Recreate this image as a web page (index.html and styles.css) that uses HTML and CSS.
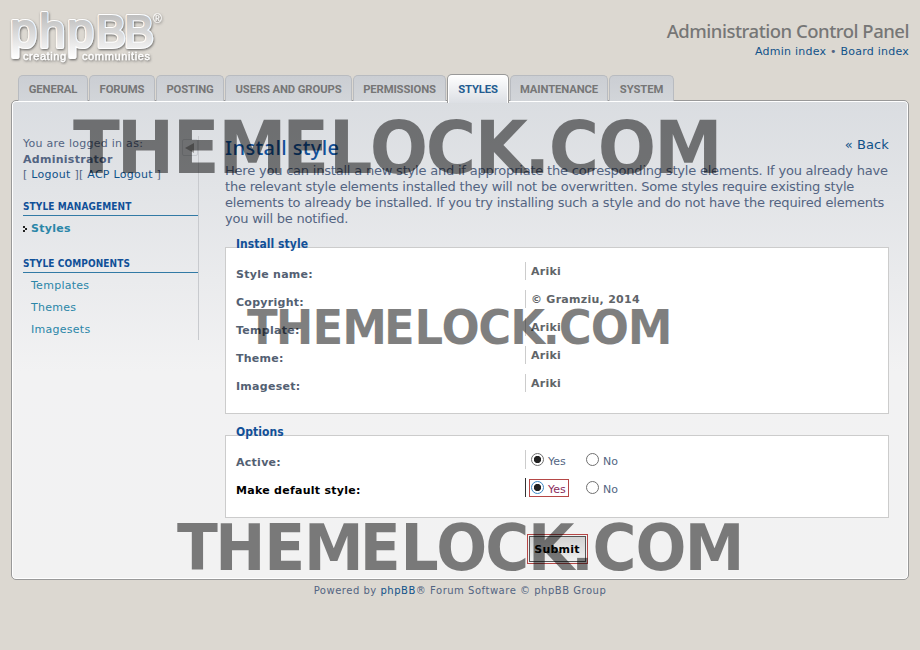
FILE: index.html
```
<!DOCTYPE html>
<html lang="en">
<head>
<meta charset="utf-8">
<title>Administration Control Panel</title>
<link rel="stylesheet" href="styles.css">
</head>
<body>
<header class="header">
  <svg class="logo" width="160" height="62" viewBox="0 0 160 62" role="img" aria-label="phpBB creating communities">
    <defs>
      <linearGradient id="silver" gradientUnits="userSpaceOnUse" x1="0" y1="6" x2="0" y2="50"><stop offset="0" stop-color="#bdbdbd"/><stop offset=".5" stop-color="#dedede"/><stop offset="1" stop-color="#fff"/></linearGradient>
      <filter id="shade" x="-10%" y="-10%" width="120%" height="130%"><feDropShadow dx=".7" dy="1.2" stdDeviation=".8" flood-color="#555" flood-opacity=".85"/></filter>
    </defs>
    <g filter="url(#shade)">
      <text class="logo-word logo-edge" y="38.5"><tspan class="p" x="0">p</tspan><tspan class="h" x="29">h</tspan><tspan class="p" x="57">p</tspan><tspan class="b" x="86">B</tspan><tspan class="b" x="114">B</tspan></text>
      <text class="logo-reg" x="143" y="15">®</text>
    </g>
    <text class="logo-word logo-fill" y="38.5"><tspan class="p" x="0">p</tspan><tspan class="h" x="29">h</tspan><tspan class="p" x="57">p</tspan><tspan class="b" x="86">B</tspan><tspan class="b" x="114">B</tspan></text>
    <g filter="url(#shade)" class="logo-tag">
      <text x="13" y="52" textLength="43">creating</text>
      <text x="72" y="52" textLength="68">communities</text>
    </g>
  </svg>
  <div class="header-info">
    <h1>Administration Control Panel</h1>
    <p><a href="#">Admin index</a> • <a href="#">Board index</a></p>
  </div>
</header>
<nav class="tabs">
  <a class="tab t-general" href="#">GENERAL</a>
  <a class="tab t-forums" href="#">FORUMS</a>
  <a class="tab t-posting" href="#">POSTING</a>
  <a class="tab t-users" href="#">USERS AND GROUPS</a>
  <a class="tab t-perm" href="#">PERMISSIONS</a>
  <a class="tab t-styles active" href="#">STYLES</a>
  <a class="tab t-maint" href="#">MAINTENANCE</a>
  <a class="tab t-system" href="#">SYSTEM</a>
</nav>
<div class="panel">
  <aside class="menu">
    <span class="toggle"></span>
    <div class="login">You are logged in as:<br><strong>Administrator</strong><br>[ <a href="#">Logout</a> ][ <a href="#">ACP Logout</a> ]</div>
    <h2>STYLE MANAGEMENT</h2>
    <a class="item current" href="#"><svg width="5" height="7" viewBox="0 0 5 7"><path d="M0 0h2v2H0zM2 2h2v2H2zM0 4h2v2H0z" fill="#222"/></svg>Styles</a>
    <h2 class="second">STYLE COMPONENTS</h2>
    <a class="item" href="#">Templates</a>
    <a class="item" href="#">Themes</a>
    <a class="item" href="#">Imagesets</a>
  </aside>
  <main class="main">
    <div class="title-row"><h2>Install style</h2><a href="#">« Back</a></div>
    <p class="intro">Here you can install a new style and if appropriate the corresponding style elements. If you already have<br>the relevant style elements installed they will not be overwritten. Some styles require existing style<br>elements to already be installed. If you try installing such a style and do not have the required elements<br>you will be notified.</p>
    <section class="box details">
      <h3>Install style</h3>
      <dl>
        <div><dt>Style name:</dt><dd>Ariki</dd></div>
        <div><dt>Copyright:</dt><dd>© Gramziu, 2014</dd></div>
        <div><dt>Template:</dt><dd>Ariki</dd></div>
        <div><dt>Theme:</dt><dd>Ariki</dd></div>
        <div><dt>Imageset:</dt><dd>Ariki</dd></div>
      </dl>
    </section>
    <section class="box options">
      <h3>Options</h3>
      <dl>
        <div><dt>Active:</dt><dd><label class="yes"><i class="radio on"></i>Yes</label><label><i class="radio"></i>No</label></dd></div>
        <div class="hover"><dt>Make default style:</dt><dd><label class="yes marked"><i class="radio on focus"></i>Yes</label><label><i class="radio"></i>No</label></dd></div>
      </dl>
    </section>
    <div class="submit-row"><span class="submit-mark"><button type="button">Submit</button></span></div>
  </main>
</div>
<footer>Powered by <a href="#">phpBB</a>® Forum Software © phpBB Group</footer>
<svg class="watermark" width="920" height="650" viewBox="0 0 920 650">
  <text transform="translate(73 172.8) scale(.96 1.01)" x="0 45.6 104 151.4 218 266.5 309.2 367.5 418.5 470 495.6 546.7 605.5">THEMELOCK.COM</text>
  <text transform="translate(247 344) scale(.629 .673)" x="0 45.6 104 151.4 218 266.5 309.2 367.5 418.5 470 495.6 546.7 605.5">THEMELOCK.COM</text>
  <text transform="translate(177 570) scale(.8385 .905)" x="0 45.6 104 151.4 218 266.5 309.2 367.5 418.5 470 495.6 546.7 605.5">THEMELOCK.COM</text>
</svg>
</body>
</html>
```
FILE: styles.css
```
* { box-sizing: border-box; }
body { margin: 0; width: 920px; height: 650px; overflow: hidden; background: #dcd8d1; color: #536482; font: 11px/16px "DejaVu Sans", sans-serif; letter-spacing: .27px; }
a { color: #105289; text-decoration: none; }
h1, h2, h3, p, dl, dd { margin: 0; }
.header { display: flex; justify-content: space-between; height: 74px; padding: 8px 11px 0 10px; }
.logo { display: block; overflow: visible; letter-spacing: 0; }
.logo-word { font: 46px "Liberation Sans", sans-serif; }
.logo-word .p { font-size: 48px; }
.logo-word .h { font-size: 47px; }
.logo-word .b { font-size: 44.5px; }
.logo-edge { fill: #fff; stroke: #fff; stroke-width: 4px; stroke-linejoin: round; }
.logo-fill { fill: url(#silver); stroke: url(#silver); stroke-width: 2px; stroke-linejoin: round; }
.logo-reg { font: 12px "Liberation Sans", sans-serif; fill: #fff; }
.logo-tag { font: 11px "Liberation Sans", sans-serif; fill: #fff; stroke: #fff; stroke-width: .3px; }
.header-info { text-align: right; padding-top: 11px; }
.header-info h1 { font: 500 18.5px/24px "Noto Sans", sans-serif; color: #767676; letter-spacing: -.49px; }
.header-info p { padding-top: 1px; letter-spacing: .24px; }
.tabs { display: flex; align-items: flex-end; height: 27px; padding-left: 18px; gap: 1px; }
.tab { height: 26px; border: 1px solid #b8bbc0; border-bottom: 0; border-radius: 5px 5px 0 0; background: linear-gradient(#cbced3, #d2d5d9); color: #767676; font: bold 11.3px/27px Roboto, sans-serif; letter-spacing: -.12px; text-align: center; white-space: nowrap; }
.t-general { width: 70px; }
.t-forums { width: 66px; }
.t-posting { width: 68px; }
.t-users { width: 127px; }
.t-perm { width: 93px; }
.t-styles { width: 62px; }
.t-maint { width: 98px; }
.t-system { width: 65px; }
.tab.active { position: relative; height: 29px; margin-bottom: -2px; border-color: #999; background: linear-gradient(#fff, #dcdfe4); box-shadow: inset 1px 1px #fff, inset -1px 0 #fff; color: #235c90; line-height: 29px; }
.panel { display: flex; width: 898px; height: 480px; margin: -1px 0 0 11px; border: 1px solid #999; border-radius: 5px; box-shadow: inset 0 0 0 1px #fff; background: linear-gradient(#dadde1, #f2f2f3 270px, #f2f2f2); padding: 35px 19px 0 11px; }
.menu { position: relative; width: 176px; height: 204px; border-right: 1px solid #c8cace; font-size: 11px; }
.toggle { position: absolute; right: 0; top: 3px; width: 16px; height: 17px; border: 1px solid #c7cacf; border-radius: 2px; }
.toggle::before { content: ""; position: absolute; left: 2px; top: 3px; border: 5px solid transparent; border-left: 0; border-right: 9px solid #969696; }
.login { height: 63px; line-height: 15.5px; }
.menu h2 { height: 17px; font: bold 10px/15px "DejaVu Sans Condensed", "DejaVu Sans", sans-serif; color: #115098; border-bottom: 1px solid #327aa5; letter-spacing: .1px; }
.menu h2.second { margin-top: 18px; }
.item { display: flex; align-items: center; height: 22px; padding: 4px 0 0 8px; color: #2a86a8; }
.item.current { padding-left: 0; gap: 3px; font-weight: bold; }
.main { width: 664px; margin-left: 26px; }
.title-row { display: flex; justify-content: space-between; height: 25px; }
.title-row h2 { font: 500 20px/23px "Noto Sans", sans-serif; color: #115098; letter-spacing: .4px; }
.title-row a { font-size: 13px; line-height: 17px; letter-spacing: .1px; }
.intro { font-size: 13px; line-height: 16px; height: 65px; padding-top: 2px; white-space: nowrap; letter-spacing: -.205px; }
.box { border: 1px solid #ccc; background: #fff; }
.box h3 { width: max-content; height: 17px; margin: -13px 0 0 10px; font: bold 12px/18px "DejaVu Sans Condensed", "DejaVu Sans", sans-serif; letter-spacing: .05px; color: #115098; }
.details { height: 167px; margin-top: 21px; }
.options { height: 83px; margin-top: 21px; }
.box dl { padding: 10px 10px 0; }
.box dl > div { display: flex; height: 28px; }
dt { width: 289px; padding-top: 5px; font-weight: bold; color: #536072; }
dd { display: flex; height: 18px; border-left: 1px solid #ccc; padding-left: 5px; line-height: 19px; font-weight: bold; color: #606468; }
.options dd { height: 19px; padding-left: 3px; font-weight: normal; color: #536482; }
dd label { display: flex; align-items: center; height: 18px; gap: 4px; margin-top: 1px; padding: 3px 1px 0; border: 1px solid transparent; line-height: 16px; letter-spacing: 0; }
.yes { width: 40px; margin-right: 15px; }
.marked { border-color: #b54746; color: #8a2c5c; }
.radio { flex: none; width: 13px; height: 13px; border: 1px solid #707070; border-radius: 50%; background: #fff; margin-top: -4px; }
.on { background: radial-gradient(circle, #222 0 3.3px, #fff 4px); }
.focus { border-color: #3c87c4; }
.hover dt { color: #000; }
.hover dd { border-color: #333; }
.submit-row { display: flex; justify-content: center; padding-top: 16px; }
.submit-mark { border: 1px solid #b54746; padding: 1px; }
.submit-mark button { display: block; width: 57px; height: 26px; border: 1px solid #555; padding: 0; background: linear-gradient(#d2d2d2, #efefef); font: bold 11px "DejaVu Sans", sans-serif; letter-spacing: .2px; color: #000; }
footer { text-align: center; font-size: 10px; line-height: 18px; padding-top: 2px; letter-spacing: .52px; }
.watermark { position: absolute; left: 0; top: 0; pointer-events: none; fill: #000; fill-opacity: .5; font: bold 71.5px "DejaVu Sans", sans-serif; letter-spacing: 0; }
```
